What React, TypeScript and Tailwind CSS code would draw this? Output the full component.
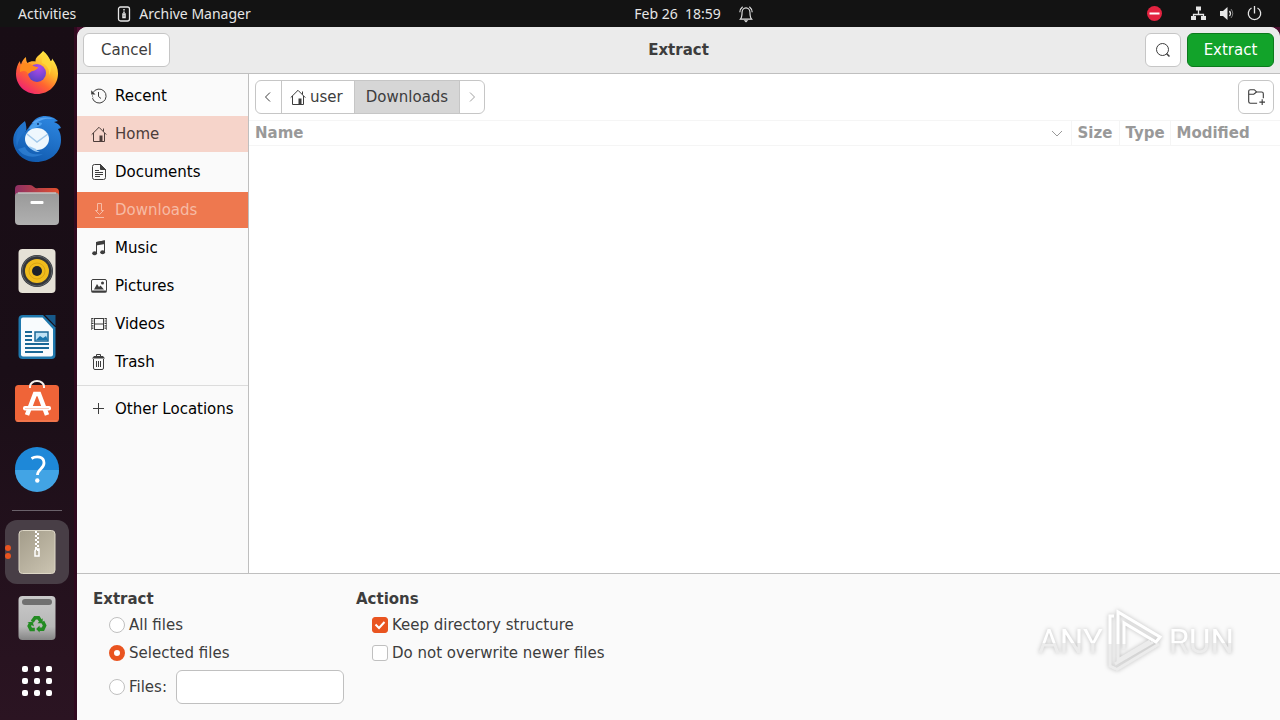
import React from 'react';

// Props interface for the small symbolic icons
interface IconProps {
  className?: string;
  children: React.ReactNode;
}

/**
 * 16px outline icon, coloured by the current text colour.
 */
function Icon({ className = 'size-4', children }: IconProps) {
  return (
    <svg viewBox="0 0 16 16" className={`${className} shrink-0`} fill="none" stroke="currentColor" aria-hidden="true">
      {children}
    </svg>
  );
}

const homeShape = (
  <>
    <path d="M.7 8.6 8 1.3l7.3 7.3M2.5 7v8.5h11V7M12.5 5.5v-3" />
    <path d="M8.5 9.5h3v6h-3z" fill="currentColor" stroke="none" />
  </>
);

const places = [
  {
    name: 'Recent',
    icon: (
      <>
        <path d="M2 4.6A7 7 0 1 1 1.5 10.4M7.5 4v4.5l2.5 2" />
        <path d="M.2 2.2v4.3h4.3z" fill="currentColor" stroke="none" />
        <path d="M1 8h1M1.5 10.2l.8-.3" />
      </>
    ),
  },
  { name: 'Home', icon: homeShape },
  {
    name: 'Documents',
    icon: (
      <>
        <path d="M3.5.5h6l5 5v8a2 2 0 0 1-2 2h-9a2 2 0 0 1-2-2v-11a2 2 0 0 1 2-2z" />
        <path d="M9.5.5v5h5z" fill="currentColor" />
        <path d="M4 6.5h4M4 8.5h8M4 10.5h8M4 12.5h5" />
      </>
    ),
  },
  {
    name: 'Downloads',
    icon: <path d="M6.5 1.5h4v7h2l-4 4-4-4h2zM4 15.5h9" />,
  },
  {
    name: 'Music',
    icon: (
      <>
        <path d="M5.5 13V2.500l8-1.500v11" />
        <path d="M5 2l9-1.800V4L5 5.500z" fill="currentColor" stroke="none" />
        <ellipse cx="3.600" cy="13.200" rx="2.400" ry="2" fill="currentColor" stroke="none" />
        <ellipse cx="11.600" cy="12.200" rx="2.400" ry="2" fill="currentColor" stroke="none" />
      </>
    ),
  },
  {
    name: 'Pictures',
    icon: (
      <>
        <rect x=".5" y="1.500" width="15" height="12.500" rx="1.500" />
        <path d="M.5 13.500h15" strokeWidth="2" />
        <path d="M3 11.500 6 6l2 3 1.500-1.500L13 11.500z" fill="currentColor" stroke="none" />
        <circle cx="11.500" cy="5" r="1.500" fill="currentColor" stroke="none" />
      </>
    ),
  },
  {
    name: 'Videos',
    icon: (
      <>
        <path d="M3.500 2v12M12.500 2v12M3 2.500h10M3 8h10M3 13.500h10" />
        <path d="M1.500 2v12M14.500 2v12" strokeWidth="2" strokeDasharray="1.200 1.200" />
        <path d="M.5 2v12M15.500 2v12" strokeWidth=".6" />
      </>
    ),
  },
  {
    name: 'Trash',
    icon: (
      <>
        <path d="M2.500 5v9a1.500 1.500 0 0 0 1.500 1.500h7a1.500 1.500 0 0 0 1.500-1.500V5M5.500 7v6M7.500 7v6M9.500 7v6M5.500 2.500v-2h4v2" />
        <path d="M1 4.500 3 2h9l2 2.500z" fill="currentColor" stroke="none" />
      </>
    ),
  },
];

function FirefoxIcon() {
  return (
    <svg viewBox="0 0 48 48" className="size-12" aria-hidden="true">
      <defs>
        <linearGradient id="fox" x1=".85" y1=".1" x2=".25" y2=".95">
          <stop offset="0" stopColor="#fff04a" />
          <stop offset=".35" stopColor="#ffb52a" />
          <stop offset=".65" stopColor="#ff6430" />
          <stop offset="1" stopColor="#f0266f" />
        </linearGradient>
        <radialGradient id="globe" cx=".6" cy=".2" r=".9">
          <stop offset="0" stopColor="#b04bea" />
          <stop offset="1" stopColor="#5040c0" />
        </radialGradient>
      </defs>
      <path
        d="M30 2c4 3 6 6 7.500 10 1.500 0 1.500-1 1.500-2.500 4 5 6 10 6 15C45 36 36 45 24 45S3 36 3 25c0-5 1.500-10 4-13 0 2 .5 2.500 1 3.500 1-3.500 3-6 5-7.500 0 3 .5 5 1.500 6 2-1.500 5-2 8-1.500C22 8 27 6 30 2z"
        fill="url(#fox)"
      />
      <circle cx="24" cy="24" r="9" fill="url(#globe)" />
      <path d="M8 16c3-3 8-2 11 0 2 1.500 4 2 6 2 0 2-3 3.500-5 4-2 0-3 2-5 3-2-4-5-3-8-2 0-3 0-5 1-7z" fill="#ff8a1e" />
      <path d="M29 14c5 2 8 7 7 12 3-5 3-10 1-15l-7-9c1 5-2 8-1 12z" fill="#ffd83a" opacity=".8" />
    </svg>
  );
}

function ThunderbirdIcon() {
  return (
    <svg viewBox="0 0 50 48" className="h-12 w-[50px]" aria-hidden="true">
      <defs>
        <linearGradient id="bird" x1=".7" y1="0" x2=".3" y2="1">
          <stop offset="0" stopColor="#2d86e0" />
          <stop offset="1" stopColor="#1059ad" />
        </linearGradient>
      </defs>
      {/* Body and tail */}
      <path d="M13 6C5 12-1 20 2 31c3 10 12 16 22 16 14 0 25-9 25-22 0-5-1-8-3-11l3-1c-1-3-4-5-7-6l4-1-4-3C34-1 24 1 20 8c-3 4-5 7-7 9 1-4 1-7 0-11z" fill="url(#bird)" />
      <path d="M13 7C5 14 3 22 5 32c1-7 4-12 9-16 1-3 0-6-1-9z" fill="#2273cb" />
      <path d="M20 8c5-5 13-7 22-4-9-1-14 1-19 5z" fill="#5aa6f2" />
      <path d="M17 14c2-6 8-8 13-6 0 3-5 4-10 6z" fill="#4ba0ee" />
      <circle cx="26" cy="9" r="1" fill="#0b356f" />
      {/* Envelope */}
      <ellipse cx="25" cy="24" rx="12" ry="11" fill="#eef7fd" />
      <path d="M15 19l10 8 11-8" fill="none" stroke="#a3c9ea" strokeWidth="1.500" />
      <path d="M17 31c2 4 6 6 11 6-3-1-4-2-4-3z" fill="#9ccbf3" />
      <path d="M6 34c5 8 16 10 25 5-9 1-15 0-18-7z" fill="#3f94e6" opacity=".5" />
    </svg>
  );
}

function FilesIcon() {
  return (
    <svg viewBox="0 0 46 42" className="h-[42px] w-[46px]" aria-hidden="true">
      <defs>
        <linearGradient id="tab">
          <stop offset="0" stopColor="#8d2f64" />
          <stop offset="1" stopColor="#e2502d" />
        </linearGradient>
        <linearGradient id="folder" x2="0" y2="1">
          <stop offset="0" stopColor="#999999" />
          <stop offset="1" stopColor="#b0b0b0" />
        </linearGradient>
      </defs>
      <path d="M1 14V5q0-4 4-4h11q2 0 4 2t4 1h17q4 0 4 4v6z" fill="url(#tab)" />
      <rect x="1" y="8.500" width="44" height="32.500" rx="4" fill="url(#folder)" />
      <path d="M4 9h38" stroke="#d8d8d8" />
      <rect x="16.500" y="17" width="13" height="3" rx="1" fill="#fff" />
    </svg>
  );
}

function RhythmboxIcon() {
  return (
    <svg viewBox="0 0 46 46" className="size-[46px]" aria-hidden="true">
      <rect x="4.500" y="1" width="37" height="44" rx="4" fill="#e5e1d6" />
      <circle cx="23" cy="23" r="16" fill="#34363a" />
      <circle cx="23" cy="23" r="15" fill="none" stroke="#5e656b" />
      <circle cx="23" cy="23" r="12" fill="#f0bc1c" />
      <circle cx="23" cy="23" r="8" fill="none" stroke="#d9a514" />
      <circle cx="23" cy="23" r="5" fill="#1c222b" />
    </svg>
  );
}

function WriterIcon() {
  return (
    <svg viewBox="0 0 46 46" className="size-[46px]" aria-hidden="true">
      <path d="M9 1h20l12.500 12.500V41q0 4-4 4h-29q-4 0-4-4V5q0-4 4.500-4z" fill="#1f78ad" />
      <path d="M9 3.500h19.500L39 15v25.500q0 2-2 2H9q-2 0-2-2v-35q0-2 2-2z" fill="#f8fbfd" />
      <path d="M31 1h10.500v11z" fill="#17598a" />
      <g stroke="#1a6896" strokeWidth="2">
        <path d="M11 18h7M11 22h7M11 26h7M11 30h24M11 34h24M11 38h18" />
      </g>
      <rect x="21" y="18" width="13" height="9" fill="#bfe2f5" stroke="#1a6896" strokeWidth="1.500" />
      <path d="M22 26l4-4 3 2 3-2 2 4z" fill="#1a76ae" />
    </svg>
  );
}

function SoftwareIcon() {
  return (
    <svg viewBox="0 0 46 46" className="size-[46px]" aria-hidden="true">
      <rect x="1" y="5" width="44" height="37" rx="3.500" fill="#ef6438" />
      <path d="M2.500 41h41" stroke="#f3865f" />
      <path d="M16 8V6.500a7 5.500 0 0 1 14 0V8" fill="none" stroke="#f6f1ed" strokeWidth="2" />
      <path d="M13 35l8-21h4l8 21" fill="none" stroke="#fff" strokeWidth="4.500" />
      <rect x="9" y="26" width="28" height="4.500" rx="2" fill="#fff" />
      <path d="M11 28.500h24" stroke="#f8cdbd" />
    </svg>
  );
}

function HelpIcon() {
  return (
    <svg viewBox="0 0 46 46" className="size-[46px]" aria-hidden="true">
      <circle cx="23" cy="23" r="22" fill="#1e88d8" />
      <path d="M1 24a22 22 0 0 0 44 0z" fill="#42a4e5" />
      <path d="M17.500 12.500c5-3 12.500-2 12.500 4.500 0 6-6.500 6-6.500 12" fill="none" stroke="#fff" strokeWidth="2.800" />
      <circle cx="23.300" cy="34.500" r="2.200" fill="#fff" />
    </svg>
  );
}

function ArchiveIcon() {
  return (
    <svg viewBox="0 0 46 46" className="size-[46px]" aria-hidden="true">
      <defs>
        <linearGradient id="zip" x2=".8" y2="1">
          <stop offset="0" stopColor="#a39c8a" />
          <stop offset="1" stopColor="#c8c1ae" />
        </linearGradient>
      </defs>
      <rect x="5" y="1.500" width="36" height="43" rx="3.500" fill="url(#zip)" stroke="#ddd7c6" />
      <path d="M22 2v20" stroke="#fff" strokeWidth="2" strokeDasharray="2 2" />
      <path d="M24 4v18" stroke="#fff" strokeWidth="2" strokeDasharray="2 2" />
      <path d="M22 20h3v7h-4v-5z" fill="none" stroke="#fff" strokeWidth="1.500" />
    </svg>
  );
}

function TrashBinIcon() {
  return (
    <svg viewBox="0 0 46 46" className="size-[46px]" aria-hidden="true">
      <defs>
        <linearGradient id="bin" x2="0" y2="1">
          <stop offset="0" stopColor="#c9c9c9" />
          <stop offset=".7" stopColor="#b8b8b8" />
          <stop offset="1" stopColor="#858585" />
        </linearGradient>
      </defs>
      <rect x="4.500" y="1" width="37" height="44" rx="4" fill="url(#bin)" />
      <rect x="8" y="4" width="30" height="6" rx="3" fill="#707070" />
      {/* Three chasing arrows */}
      <g transform="translate(3 4) scale(.87)">
        <g fill="none" stroke="#238b22" strokeWidth="4">
          <path d="M17.500 26l3.200-4.500h4l2.500 4" />
          <path d="M29.500 26l2.300 4.500-2 4.300h-5.500" />
          <path d="M20.500 35h-4.500l-2-4 2-3.500" />
        </g>
        <path d="M29.500 22v6h-6zM26 30.500v8l-4-4zM12 27l6-1 1.500 5.500z" fill="#238b22" />
      </g>
    </svg>
  );
}

const dockApps = [
  { name: 'Firefox', icon: <FirefoxIcon /> },
  { name: 'Thunderbird', icon: <ThunderbirdIcon /> },
  { name: 'Files', icon: <FilesIcon /> },
  { name: 'Rhythmbox', icon: <RhythmboxIcon /> },
  { name: 'LibreOffice Writer', icon: <WriterIcon /> },
  { name: 'Ubuntu Software', icon: <SoftwareIcon /> },
  { name: 'Help', icon: <HelpIcon /> },
];

/**
 * Black system bar at the top of the desktop.
 */
function TopBar() {
  return (
    <header className="grid h-[27px] shrink-0 grid-cols-[1fr_auto_1fr] items-center bg-[#131313] font-['Noto_Sans',sans-serif] text-sm text-[#e6e6e6]">
      <div className="flex items-center pl-[18px]">
        <button type="button" className="mr-10">Activities</button>
        <button type="button" className="flex items-center gap-[7px]">
          <Icon className="size-4">
            <rect x="2.500" y="1" width="11" height="14" rx="2" strokeWidth="1.300" />
            <path d="M8 3v1.500M8 5.500V7" strokeWidth="1.500" />
            <rect x="7" y="8" width="2" height="3.500" strokeWidth="1.500" />
          </Icon>
          Archive Manager
        </button>
      </div>
      <div className="flex items-center gap-4 pl-[109px]">
        <button type="button" className="whitespace-pre">Feb 26  18:59</button>
        <Icon className="size-[18px]">
          <path d="M3 12.500c1.500-1.500 1.500-3 1.500-6a3.500 4 0 0 1 7 0c0 3 0 4.500 1.500 6zM2.500 6.500q0-3 2.500-5M13.500 6.500q0-3-2.500-5" />
          <path d="M6 13.500h4L8 15.500z" fill="currentColor" stroke="none" />
        </Icon>
      </div>
      <div className="flex items-center justify-end gap-3 pr-[18px]">
        <Icon className="mr-4 size-4">
          <circle cx="8.500" cy="7.500" r="7.500" fill="#e32340" stroke="none" />
          <path d="M3.500 7.500h10" stroke="#fff" strokeWidth="2" />
        </Icon>
        <Icon>
          <path d="M8.500 4v5M3.500 11V8.500h10V11" strokeWidth="1.300" />
          <path d="M6 .5h5v4H6zM1 10h5v4H1zM11 10h5v4h-5z" fill="currentColor" stroke="none" />
        </Icon>
        <Icon>
          <path d="M2 5h3l4.500-4v13L5 10H2z" fill="currentColor" stroke="none" />
          <path d="M11.500 5q2 2.500 0 5" strokeWidth="1.300" />
          <path d="M13 3q3.500 4.500 0 9" opacity=".5" />
        </Icon>
        <Icon>
          <path d="M5.500 2a6.200 6.200 0 1 0 6 0M8.500 0v7.500" strokeWidth="1.300" />
        </Icon>
      </div>
    </header>
  );
}

/**
 * Launcher on the left edge of the desktop.
 */
function Dock() {
  return (
    <nav aria-label="Dock" className="flex w-[77px] shrink-0 flex-col border-r-3 border-[#30091f] bg-linear-to-b from-[#180d15] via-[#1a0e17] to-[#2b1422] pt-[13px]">
      {dockApps.map((app) => (
        <button key={app.name} type="button" aria-label={app.name} className="flex h-[66px] items-center justify-center">
          {app.icon}
        </button>
      ))}
      <hr className="mx-3 mt-2 mb-[9px] border-[#6a616a]" />
      {/* Running app with its two window dots */}
      <button type="button" aria-label="Archive Manager" className="relative mx-[5px] flex h-16 items-center justify-center rounded-xl bg-[#483e46]">
        <ArchiveIcon />
        <span className="absolute top-[25px] left-0 flex flex-col gap-[2px]">
          <span className="size-[6px] rounded-full bg-[#e95420]" />
          <span className="size-[6px] rounded-full bg-[#e95420]" />
        </span>
      </button>
      <button type="button" aria-label="Trash" className="flex h-[68px] items-center justify-center">
        <TrashBinIcon />
      </button>
      <button type="button" aria-label="Show Applications" className="flex h-[58px] items-center justify-center">
        <span className="grid grid-cols-3 gap-[6px]">
          {[1, 2, 3, 4, 5, 6, 7, 8, 9].map((dot) => (
            <span key={dot} className="size-[6px] rounded-[2px] bg-white" />
          ))}
        </span>
      </button>
    </nav>
  );
}

function Sidebar() {
  return (
    <aside className="w-[172px] shrink-0 border-r border-[#bfbfbf] bg-[#fafafa] pt-1">
      <ul className="flex flex-col gap-[2px]">
        {places.map((place) => {
          let state = 'text-black';
          if (place.name === 'Home') state = 'bg-[#f6d4ca] text-[#4c3d3a]';
          if (place.name === 'Downloads') state = 'bg-[#ee784f] text-[#f6bba5]';

          return (
            <li key={place.name}>
              <button type="button" className={`flex h-9 w-full items-center gap-2 px-[14px] ${state}`}>
                <span className={state === 'text-black' ? 'text-[#3d3d3d]' : ''}>
                  <Icon>{place.icon}</Icon>
                </span>
                {place.name}
              </button>
            </li>
          );
        })}
      </ul>
      <hr className="my-[5px] border-[#dcdcdc]" />
      <button type="button" className="flex h-9 w-full items-center gap-2 px-[14px] whitespace-nowrap text-black">
        <Icon className="size-4 text-[#3d3d3d]">
          <path d="M2 7.500h11M7.500 2v11" />
        </Icon>
        Other Locations
      </button>
    </aside>
  );
}

function FileList() {
  return (
    <table className="w-full table-fixed border-y border-[#f5f5f5]">
      <thead>
        <tr className="h-[25px] text-left text-[#999999]">
          <th className="px-[6px]">
            <span className="flex items-center justify-between">
              Name
              <Icon>
                <path d="M3 6l5 5 5-5" />
              </Icon>
            </span>
          </th>
          <th className="w-12 border-l border-[#f5f5f5] pl-[6px]">Size</th>
          <th className="w-[51px] border-l border-[#f5f5f5] pl-[6px]">Type</th>
          <th className="w-[110px] border-l border-[#f5f5f5] pl-[6px]">Modified</th>
        </tr>
      </thead>
      <tbody />
    </table>
  );
}

// Props interface for the radio and check choices
interface ChoiceProps {
  id: string;
  label: string;
  checked?: boolean;
}

function RadioChoice({ id, label, checked }: ChoiceProps) {
  return (
    <>
      <input
        type="radio"
        id={id}
        name="extract"
        defaultChecked={checked}
        className="size-4 shrink-0 appearance-none rounded-full border border-[#c0c0c0] bg-white checked:border-5 checked:border-[#e95420]"
      />
      <label htmlFor={id}>{label}</label>
    </>
  );
}

function CheckChoice({ id, label, checked }: ChoiceProps) {
  return (
    <div className="relative flex h-7 items-center gap-1 pl-4">
      <input
        type="checkbox"
        id={id}
        defaultChecked={checked}
        className="peer size-4 shrink-0 appearance-none rounded-[3px] border border-[#c0c0c0] bg-white checked:border-[#e95420] checked:bg-[#e95420]"
      />
      <span className="pointer-events-none absolute left-4 hidden text-white peer-checked:block">
        <Icon>
          <path d="M3.500 7.500l3.500 3.500 5.500-6" strokeWidth="2" />
        </Icon>
      </span>
      <label htmlFor={id}>{label}</label>
    </div>
  );
}

function Watermark() {
  return (
    <div className="pointer-events-none absolute right-[46px] bottom-[46px] flex items-center gap-1 font-['Roboto',sans-serif] text-[33px] leading-none drop-shadow-[0_0_2px_rgba(0,0,0,0.25)]">
      <span className="bg-linear-to-b from-white from-55% to-[#ececec] to-55% bg-clip-text text-transparent">ANY</span>
      <svg viewBox="0 0 58 66" className="h-[66px] w-[58px]" fill="none" stroke="#ffffff" strokeWidth="3" aria-hidden="true">
        <path d="M11 36V4l42 25-4 5-32-19v21M7 8H3v28" />
        <path d="M3 36v22l6 3M11 36v16l32-19M17 36v5M9 62l43-26M8 56l38-22" stroke="#ececec" />
      </svg>
      <span className="bg-linear-to-b from-white from-55% to-[#ececec] to-55% bg-clip-text text-transparent">RUN</span>
    </div>
  );
}

/**
 * Extract options under the file chooser.
 */
function Options() {
  return (
    <footer className="relative flex shrink-0 gap-3 border-t border-[#bfbfbf] bg-[#fafafa] px-4 py-[13px]">
      <fieldset className="w-[251px]">
        <legend className="h-6 leading-6 font-bold">Extract</legend>
        <div className="flex h-7 items-center gap-1 pl-4">
          <RadioChoice id="all-files" label="All files" />
        </div>
        <div className="flex h-7 items-center gap-1 pl-4">
          <RadioChoice id="selected-files" label="Selected files" checked />
        </div>
        <div className="flex h-10 items-center gap-1 pl-4">
          <RadioChoice id="files" label="Files:" />
          <input
            type="text"
            aria-label="Files pattern"
            className="ml-auto h-[34px] w-[168px] rounded-md border border-[#c0c0c0] bg-white px-2"
          />
        </div>
      </fieldset>
      <fieldset>
        <legend className="h-6 leading-6 font-bold">Actions</legend>
        <CheckChoice id="keep-structure" label="Keep directory structure" checked />
        <CheckChoice id="keep-newer" label="Do not overwrite newer files" />
      </fieldset>
      <Watermark />
    </footer>
  );
}

export default function App() {
  return (
    <div className="flex h-screen flex-col bg-[#4a0f30]">
      <TopBar />
      <div className="flex min-h-0 flex-1">
        <Dock />
        {/* Start dialog window */}
        <main className="flex min-w-0 flex-1 flex-col overflow-hidden rounded-t-[10px] bg-white font-['DejaVu_Sans',sans-serif] text-[15px] leading-5 text-[#3d3d3d]">
          <div className="grid h-[47px] shrink-0 grid-cols-[1fr_auto_1fr] items-center border-b border-[#bfbfbf] bg-[#ebebeb] px-[6px]">
            <button type="button" className="h-[34px] w-[87px] rounded-md border border-[#c6c6c6] bg-white">Cancel</button>
            <h1 className="font-bold">Extract</h1>
            <div className="flex justify-end gap-[6px]">
              <button type="button" aria-label="Search" className="flex h-[34px] w-9 items-center justify-center rounded-md border border-[#c6c6c6] bg-white">
                <Icon>
                  <circle cx="7.500" cy="7.500" r="6" />
                  <path d="M11.500 11.500l3 3" strokeWidth="1.500" />
                </Icon>
              </button>
              <button type="button" className="h-[34px] w-[87px] rounded-md border border-[#0b7a1c] bg-[#12a32a] text-white">Extract</button>
            </div>
          </div>

          <div className="flex min-h-0 flex-1">
            <Sidebar />
            <section className="min-w-0 flex-1">
              <div className="flex items-center justify-between p-[6px]">
                <div className="flex h-[34px] divide-x divide-[#c6c6c6] overflow-hidden rounded-md border border-[#c6c6c6]">
                  <button type="button" aria-label="Back" className="flex w-[26px] items-center justify-center">
                    <Icon>
                      <path d="M9 3.500L4.500 8 9 12.500" />
                    </Icon>
                  </button>
                  <button type="button" className="flex w-[73px] items-center gap-1 pl-2">
                    <Icon>{homeShape}</Icon>
                    user
                  </button>
                  <button type="button" className="w-[105px] bg-[#d6d6d6]">Downloads</button>
                  <button type="button" aria-label="Forward" className="flex w-6 items-center justify-center text-[#a0a0a0]">
                    <Icon>
                      <path d="M6 3.500l4.500 4.500L6 12.500" />
                    </Icon>
                  </button>
                </div>
                <button type="button" aria-label="Create Folder" className="flex h-[34px] w-9 items-center justify-center rounded-md border border-[#c6c6c6]">
                  <Icon className="size-[18px]">
                    <path d="M9 13.500H3A1.500 1.500 0 0 1 1.500 12V3A1.500 1.500 0 0 1 3 1.500h3.500L8.500 3.500H13A1.500 1.500 0 0 1 14.500 5v4M1.500 5.500H6l2.500-2M13.500 10v5M11 12.500h5" />
                  </Icon>
                </button>
              </div>
              <FileList />
            </section>
          </div>

          <Options />
        </main>
        {/* End dialog window */}
      </div>
    </div>
  );
}
